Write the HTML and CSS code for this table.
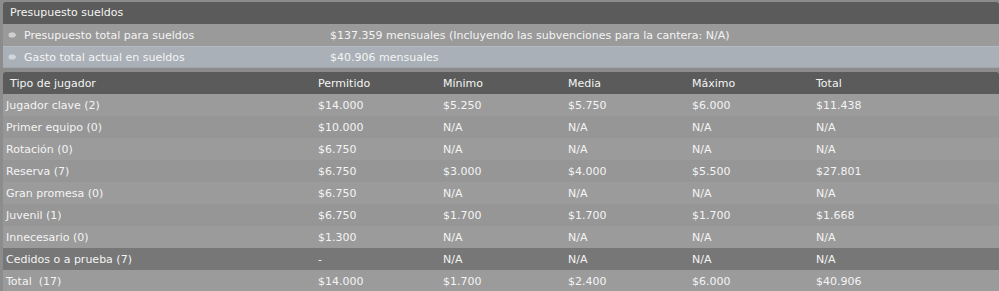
FILE: index.html
```html
<!DOCTYPE html>
<html>
<head>
<meta charset="utf-8">
<link rel="stylesheet" href="styles.css">
</head>
<body>
<div class="page">
  <section class="budget">
    <div class="head">Presupuesto sueldos</div>
    <div class="brow brow-a">
      <span class="label"><svg class="bullet" width="9" height="6" viewBox="0 0 9 6"><path d="M3 0.5 H6 L8.5 3 L6 5.5 H3 A2.5 2.5 0 0 1 3 0.5 Z" fill="#cfcfcf"/></svg>Presupuesto total para sueldos</span>
      <span class="value">$137.359 mensuales (Incluyendo las subvenciones para la cantera: N/A)</span>
    </div>
    <div class="brow brow-b">
      <span class="label"><svg class="bullet" width="9" height="6" viewBox="0 0 9 6"><path d="M3 0.5 H6 L8.5 3 L6 5.5 H3 A2.5 2.5 0 0 1 3 0.5 Z" fill="#d2d6da"/></svg>Gasto total actual en sueldos</span>
      <span class="value">$40.906 mensuales</span>
    </div>
  </section>
  <section class="tbl">
    <div class="row thead">
      <span class="c0">Tipo de jugador</span><span>Permitido</span><span>Mínimo</span><span>Media</span><span>Máximo</span><span>Total</span>
    </div>
    <div class="row r-l"><span class="c0">Jugador clave (2)</span><span>$14.000</span><span>$5.250</span><span>$5.750</span><span>$6.000</span><span>$11.438</span></div>
    <div class="row r-d"><span class="c0">Primer equipo (0)</span><span>$10.000</span><span>N/A</span><span>N/A</span><span>N/A</span><span>N/A</span></div>
    <div class="row r-l"><span class="c0">Rotación (0)</span><span>$6.750</span><span>N/A</span><span>N/A</span><span>N/A</span><span>N/A</span></div>
    <div class="row r-d"><span class="c0">Reserva (7)</span><span>$6.750</span><span>$3.000</span><span>$4.000</span><span>$5.500</span><span>$27.801</span></div>
    <div class="row r-l"><span class="c0">Gran promesa (0)</span><span>$6.750</span><span>N/A</span><span>N/A</span><span>N/A</span><span>N/A</span></div>
    <div class="row r-d"><span class="c0">Juvenil (1)</span><span>$6.750</span><span>$1.700</span><span>$1.700</span><span>$1.700</span><span>$1.668</span></div>
    <div class="row r-l"><span class="c0">Innecesario (0)</span><span>$1.300</span><span>N/A</span><span>N/A</span><span>N/A</span><span>N/A</span></div>
    <div class="row r-x"><span class="c0">Cedidos o a prueba (7)</span><span>-</span><span>N/A</span><span>N/A</span><span>N/A</span><span>N/A</span></div>
    <div class="row r-l"><span class="c0">Total&nbsp; (17)</span><span>$14.000</span><span>$1.700</span><span>$2.400</span><span>$6.000</span><span>$40.906</span></div>
  </section>
</div>
</body>
</html>
```

FILE: styles.css
```css
html, body {
  margin: 0;
  padding: 0;
  background: #8c8c8c;
}
body {
  width: 999px;
  height: 291px;
  overflow: hidden;
  font-family: "DejaVu Sans", sans-serif;
  font-size: 11px;
  color: #f4f4f4;
}
.page {
  padding: 2px 0 0 3px;
  display: flex;
  flex-direction: column;
  gap: 4px;
}
.budget {
  display: flex;
  flex-direction: column;
}
.head {
  height: 22px;
  line-height: 22px;
  background: #5a5b5a;
  padding-left: 7px;
  border-radius: 3px 3px 0 0;
}
.brow {
  height: 22px;
  display: flex;
  align-items: center;
}
.brow-a {
  background: #9a9a9a;
}
.brow-b {
  background: #a9b0b7;
  border-top: 1px solid #b3bac1;
  border-bottom: 1px solid #9fa6ad;
  height: 20px;
}
.label {
  width: 327px;
  display: flex;
  align-items: center;
}
.bullet {
  margin: 0 7px 0 5px;
}
.tbl {
  display: flex;
  flex-direction: column;
}
.row {
  display: grid;
  grid-template-columns: 309px 125px 125px 124px 124px 1fr;
  height: 22px;
  align-items: center;
}
.row span {
  padding-left: 6px;
  white-space: nowrap;
}
.row .c0 {
  padding-left: 3px;
}
.thead {
  background: #5a5b5a;
  border-radius: 3px 3px 0 0;
}
.thead .c0 {
  padding-left: 7px;
}
.r-l { background: #9b9b9b; }
.r-d { background: #969696; }
.r-x { background: #777777; }
```
